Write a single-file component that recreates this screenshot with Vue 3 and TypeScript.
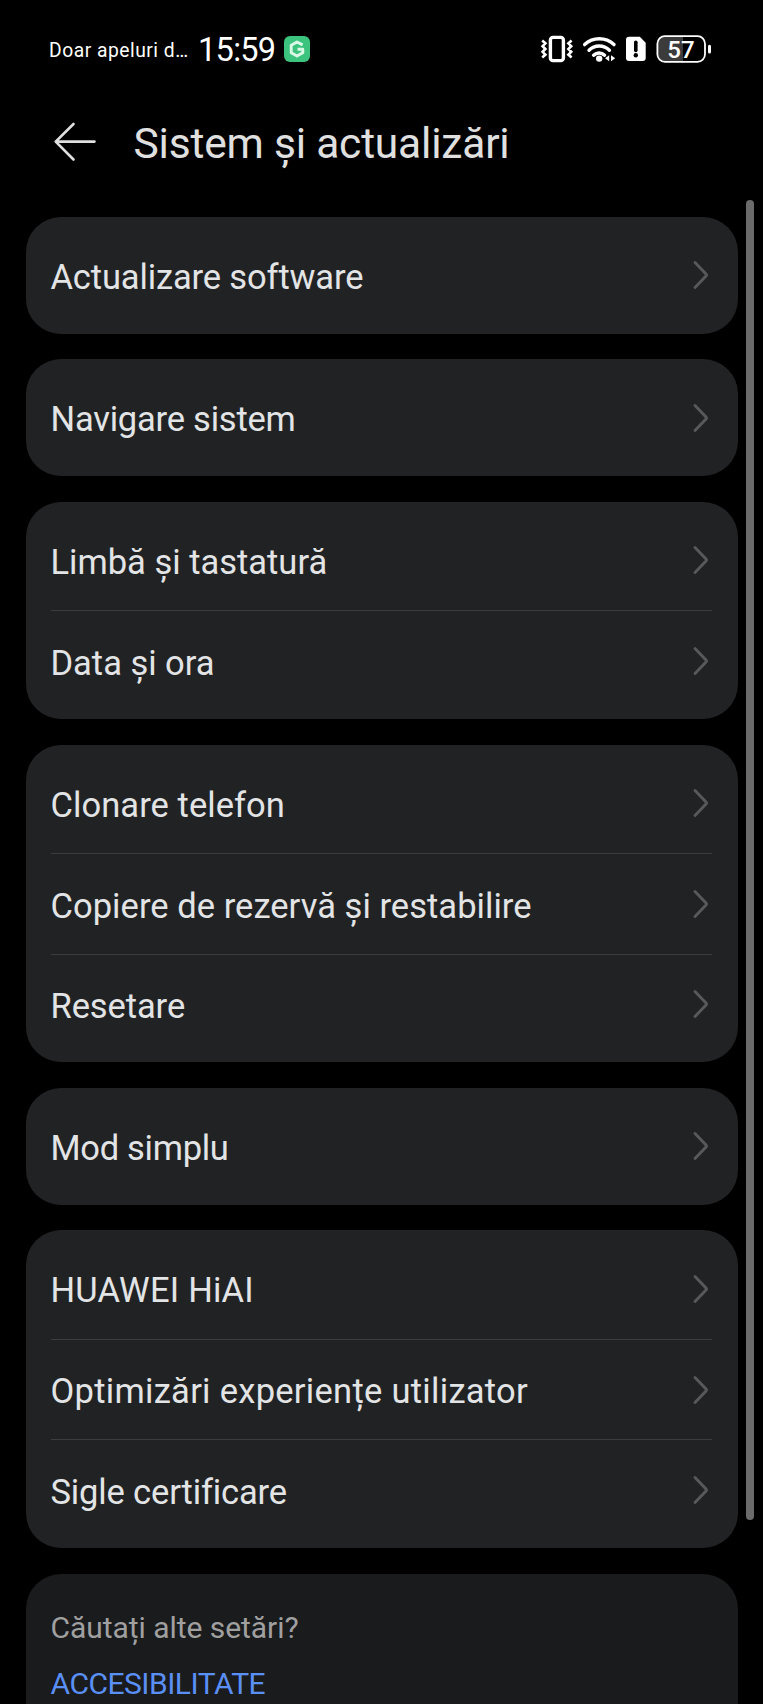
<script setup lang="ts">
interface Row {
  label: string
  tracking: number
}

const groups: Row[][] = [
  [{ label: 'Actualizare software', tracking: -0.14 }],
  [{ label: 'Navigare sistem', tracking: -0.22 }],
  [
    { label: 'Limbă și tastatură', tracking: 0 },
    { label: 'Data și ora', tracking: -0.02 },
  ],
  [
    { label: 'Clonare telefon', tracking: 0.06 },
    { label: 'Copiere de rezervă și restabilire', tracking: 0.04 },
    { label: 'Resetare', tracking: -0.1 },
  ],
  [{ label: 'Mod simplu', tracking: -0.3 }],
  [
    { label: 'HUAWEI HiAI', tracking: 0.22 },
    { label: 'Optimizări experiențe utilizator', tracking: 0.29 },
    { label: 'Sigle certificare', tracking: -0.15 },
  ],
]
</script>

<template>
  <div class="screen">
    <header class="status">
      <span class="carrier">Doar apeluri d…</span>
      <span class="clock">15:59</span>
      <svg class="app-badge" width="26" height="26" viewBox="0 0 26 26">
        <rect width="26" height="26" rx="6" fill="#3cc47f" />
        <path d="M18.6 8.9 13 6 7.2 9.2v7.6L13 20l5.8-3.2v-3.5h-5.3" fill="none" stroke="#d9f8e6" stroke-width="2.9" stroke-linejoin="round" />
      </svg>
      <svg class="indicators" width="172" height="32" viewBox="0 0 172 32">
        <g fill="none" stroke="#fff">
          <rect x="10.4" y="4.4" width="13" height="23.2" rx="2.6" stroke-width="3.4" />
          <path d="M2.2 7.6 5.4 10.4 2.6 13.2 5.4 16 2.6 18.8 5.4 21.6 2.2 24.4M31.6 7.6 28.4 10.4 31.2 13.2 28.4 16 31.2 18.8 28.4 21.6 31.6 24.4" stroke-width="2.6" />
          <path d="M44.6 11.6a21.5 21.5 0 0 1 29.4 0M49 17.2a14.4 14.4 0 0 1 20.4 0M53.6 22.2a8 8 0 0 1 11 0" stroke-width="3.4" stroke-linecap="round" />
        </g>
        <circle cx="59.2" cy="25.6" r="3.2" fill="#fff" />
        <path d="m65 25.200 4.200-3v6zM75.200 25.200l-4.200-3v6z" fill="#fff" />
        <path d="M89 3.800h10.800l5.900 6v15.200a3 3 0 0 1-3 3H89a3 3 0 0 1-3-3V6.800a3 3 0 0 1 3-3z" fill="#fff" />
        <path d="M95.800 9.200v8.300" stroke="#000" stroke-width="3.600" stroke-linecap="round" />
        <circle cx="95.800" cy="22.200" r="2.200" fill="#000" />
        <path d="M125 4h18v24h-18a7 7 0 0 1-7-7V11a7 7 0 0 1 7-7z" fill="#3b3b3b" />
        <rect x="117.400" y="3.200" width="47.600" height="25.600" rx="7.500" fill="none" stroke="#fff" stroke-width="1.800" />
        <rect x="168" y="11.800" width="3" height="8.600" rx="1.500" fill="#fff" />
        <text class="battery-level" x="141" y="24.600" text-anchor="middle" fill="#fff">57</text>
      </svg>
    </header>

    <div class="title-bar">
      <svg class="back" width="44" height="42" viewBox="0 0 44 42">
        <path d="M20.500 3 2.700 20.600 20.500 38.500M2.700 20.600H41.500" fill="none" stroke="#e0e0e0" stroke-width="2.600" stroke-linecap="round" stroke-linejoin="round" />
      </svg>
      <h1>Sistem și actualizări</h1>
    </div>

    <main class="list">
      <section v-for="(group, i) in groups" :key="i" class="card">
        <div v-for="row in group" :key="row.label" class="row">
          <span class="label" :style="{ letterSpacing: row.tracking + 'px' }">{{ row.label }}</span>
          <svg class="chevron" width="18" height="30" viewBox="0 0 18 30">
            <path d="M3 2.500 14 13.900Q15 15 14 16.100L3 27.500" fill="none" stroke="#58595a" stroke-width="2.900" stroke-linecap="round" />
          </svg>
        </div>
      </section>
      <section class="card search">
        <p class="question">Căutați alte setări?</p>
        <a class="link">ACCESIBILITATE</a>
      </section>
    </main>
    <div class="scrollbar"></div>
  </div>
</template>

<style>
body {
  background: #000;
}
</style>

<style scoped>
.screen {
  position: relative;
  box-sizing: border-box;
  height: 1704px;
  overflow: hidden;
  background: #000;
  color: #e3e4e5;
  font-family: Roboto, "Noto Sans", sans-serif;
}
.status {
  display: flex;
  align-items: center;
  height: 98px;
  padding: 0 51px 0 49px;
  color: #fff;
}
.carrier {
  width: 149px;
  padding-top: 2px;
  font-size: 19.3px;
  letter-spacing: 0.5px;
  white-space: nowrap;
}
.clock {
  width: 86px;
  padding-top: 2px;
  font-size: 32.5px;
  letter-spacing: -0.7px;
}
.indicators {
  margin-left: auto;
}
.battery-level {
  font-size: 24px;
  font-weight: 500;
}
.title-bar {
  display: flex;
  align-items: center;
  height: 88px;
  padding-left: 53px;
}
h1 {
  margin: 3px 0 0 36.5px;
  font-size: 42.5px;
  font-weight: 400;
  letter-spacing: -0.19px;
  color: #e0e0e0;
}
.list {
  display: flex;
  flex-direction: column;
  gap: 25.6px;
  padding: 31px 25.5px 0;
}
.card {
  flex: none;
  padding: 8.2px 25.5px 8.2px 25px;
  border-radius: 35px;
  background: #212224;
}
.row {
  display: flex;
  align-items: center;
  justify-content: space-between;
  box-sizing: border-box;
  height: 100.44px;
}
.row + .row {
  border-top: 1px solid #3c3d3f;
}
.label {
  padding-top: 3px;
  font-size: 34.5px;
  white-space: nowrap;
}
.chevron {
  margin-right: 2px;
}
.search {
  height: 300px;
  padding-top: 34px;
  background: #1a1b1c;
}
.question {
  margin: 0;
  font-size: 30px;
  line-height: 40px;
  letter-spacing: -0.05px;
  color: #a0a0a1;
}
.link {
  display: block;
  margin-top: 16px;
  font-size: 30px;
  line-height: 40px;
  letter-spacing: -0.5px;
  color: #5a8ff5;
}
.scrollbar {
  position: absolute;
  top: 200px;
  left: 746px;
  width: 8px;
  height: 1320px;
  border-radius: 4px;
  background: #6b6b6b;
}
</style>
